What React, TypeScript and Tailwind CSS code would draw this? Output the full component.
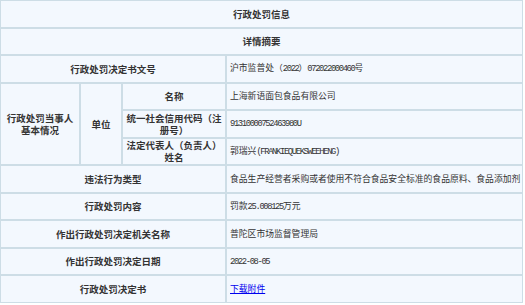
const cjk = '"Noto Sans CJK SC", "Liberation Sans", sans-serif'

// latin/digit runs look condensed and monospaced in the original
function L({ children }: { children: React.ReactNode }) {
  return (
    <span className="font-['Liberation_Mono',monospace] tracking-[-1.35px]">
      {children}
    </span>
  )
}

const td = 'border border-[#cddde6] px-[3px] h-[27.5px] align-middle'
const label = `${td} text-center font-bold text-[9.5px] text-[#333]`
const value = `${td} text-left text-[8.8px] text-[#333] whitespace-nowrap overflow-hidden max-w-[297px]`

export default function App() {
  return (
    <div className="w-[525px] h-[305px] bg-white overflow-hidden" style={{ fontFamily: cjk }}>
      <table className="w-[523px] table-fixed border-separate border-spacing-0 bg-[#f3f8fe] leading-[12px]">
        <colgroup>
          <col className="w-[80px]" />
          <col className="w-[42px]" />
          <col className="w-[104px]" />
          <col className="w-[297px]" />
        </colgroup>
        <tbody>
          <tr>
            <td colSpan={4} className={label}>行政处罚信息</td>
          </tr>
          <tr>
            <td colSpan={4} className={label}>详情摘要</td>
          </tr>
          <tr>
            <td colSpan={3} className={label}>行政处罚决定书文号</td>
            <td className={value}>
              沪市监普处（<L>2022</L>）<L>072022000460</L>号
            </td>
          </tr>
          <tr>
            <td rowSpan={3} className={label}>
              行政处罚当事人
              <br />
              基本情况
            </td>
            <td rowSpan={3} className={label}>单位</td>
            <td className={label}>名称</td>
            <td className={value}>上海新语面包食品有限公司</td>
          </tr>
          <tr>
            <td className={label}>统一社会信用代码（注册号）</td>
            <td className={value}>
              <L>91310000752463980U</L>
            </td>
          </tr>
          <tr>
            <td className={label}>法定代表人（负责人）姓名</td>
            <td className={value}>
              郭瑞兴<L>(FRANKIEQUEKSWEEHENG)</L>
            </td>
          </tr>
          <tr>
            <td colSpan={3} className={label}>违法行为类型</td>
            <td className={value}>
              食品生产经营者采购或者使用不符合食品安全标准的食品原料、食品添加剂
            </td>
          </tr>
          <tr>
            <td colSpan={3} className={label}>行政处罚内容</td>
            <td className={value}>
              罚款<L>25.008125</L>万元
            </td>
          </tr>
          <tr>
            <td colSpan={3} className={label}>作出行政处罚决定机关名称</td>
            <td className={value}>普陀区市场监督管理局</td>
          </tr>
          <tr>
            <td colSpan={3} className={label}>作出行政处罚决定日期</td>
            <td className={value}>
              <L>2022-08-05</L>
            </td>
          </tr>
          <tr>
            <td colSpan={3} className={label}>行政处罚决定书</td>
            <td className={value}>
              <a href="#" className="text-[#0000ee] underline">下载附件</a>
            </td>
          </tr>
        </tbody>
      </table>
    </div>
  )
}
